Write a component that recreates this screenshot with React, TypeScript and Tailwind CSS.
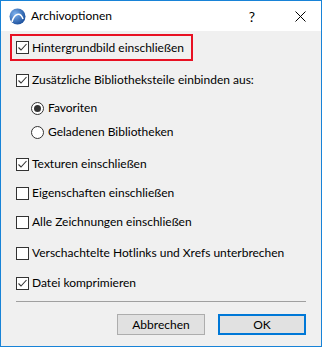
import type { ReactNode } from 'react'

function CheckBox({ checked }: { checked: boolean }) {
  return (
    <span className="w-[13px] h-[13px] border border-[#333333] bg-white shrink-0 flex items-center justify-center">
      {checked && (
        <svg width="11" height="11" viewBox="0 0 11 11">
          <path d="M1.5 5.5 L4 8 L9.5 2" fill="none" stroke="#333333" strokeWidth="1.1" />
        </svg>
      )}
    </span>
  )
}

function Radio({ checked }: { checked: boolean }) {
  return (
    <span className="w-[13px] h-[13px] rounded-full border border-[#333333] bg-white shrink-0 flex items-center justify-center">
      {checked && <span className="w-[7px] h-[7px] rounded-full bg-[#333333]" />}
    </span>
  )
}

function Row({ checked, className, children }: { checked: boolean, className: string, children: ReactNode }) {
  return (
    <div className={"h-[20px] flex items-center gap-[3px] pl-[15px] whitespace-nowrap " + className}>
      <CheckBox checked={checked} />
      <span>{children}</span>
    </div>
  )
}

function RadioRow({ checked, className, children }: { checked: boolean, className: string, children: ReactNode }) {
  return (
    <div className={"h-[20px] flex items-center gap-[4px] pl-[30px] whitespace-nowrap " + className}>
      <Radio checked={checked} />
      <span>{children}</span>
    </div>
  )
}

function Logo() {
  return (
    <svg width="17" height="17" viewBox="0 0 17 17">
      <defs>
        <radialGradient id="lg" cx="35%" cy="35%" r="70%">
          <stop offset="0" stopColor="#7fb2ee" />
          <stop offset="1" stopColor="#1a4f9c" />
        </radialGradient>
      </defs>
      <circle cx="8.5" cy="8.5" r="8" fill="url(#lg)" />
      <path d="M3 14 C5 6, 11 3, 14 11" fill="none" stroke="#ffffff" strokeWidth="1.6" />
    </svg>
  )
}

export default function App() {
  return (
    <div
      className="w-[322px] h-[347px] border border-[#1883d7] bg-[#f0f0f0] flex flex-col text-[12px] text-black"
      style={{ fontFamily: 'Lato, "Noto Sans", sans-serif' }}
    >
      <div className="h-[30px] bg-white flex items-center shrink-0">
        <div className="ml-[8px] mt-[1px]"><Logo /></div>
        <span className="ml-[5px] text-[12px]">Archivoptionen</span>
        <span className="ml-auto text-[14px] mr-[40px]">?</span>
        <svg width="11" height="11" viewBox="0 0 11 11" className="mr-[15px]">
          <path d="M0.5 0.5 L10.5 10.5 M10.5 0.5 L0.5 10.5" stroke="#000000" strokeWidth="1" />
        </svg>
      </div>

      <div className="mt-[3px] ml-[9px] w-[183px] h-[27px] border-2 border-[#e81123] flex items-center gap-[3px] pl-[4px] whitespace-nowrap">
        <CheckBox checked={true} />
        <span>Hintergrundbild einschließen</span>
      </div>

      <Row checked={true} className="mt-[9px]">Zusätzliche Bibliotheksteile einbinden aus:</Row>
      <RadioRow checked={true} className="mt-[8px]">Favoriten</RadioRow>
      <RadioRow checked={false} className="mt-[4px]">Geladenen Bibliotheken</RadioRow>
      <Row checked={true} className="mt-[12px]">Texturen einschließen</Row>
      <Row checked={false} className="mt-[9px]">Eigenschaften einschließen</Row>
      <Row checked={false} className="mt-[9px]">Alle Zeichnungen einschließen</Row>
      <Row checked={false} className="mt-[11px]">Verschachtelte Hotlinks und Xrefs unterbrechen</Row>
      <Row checked={true} className="mt-[10px]">Datei komprimieren</Row>

      <div className="mt-[8px] mx-[15px] h-px bg-[#a0a0a0]" />

      <div className="mt-[12px] flex justify-end gap-[13px] pr-[15px]">
        <button className="w-[88px] h-[21px] bg-[#e1e1e1] border border-[#adadad] flex items-center justify-center">Abbrechen</button>
        <button className="w-[88px] h-[21px] bg-[#e1e1e1] border-2 border-[#0078d7] flex items-center justify-center">OK</button>
      </div>
    </div>
  )
}
